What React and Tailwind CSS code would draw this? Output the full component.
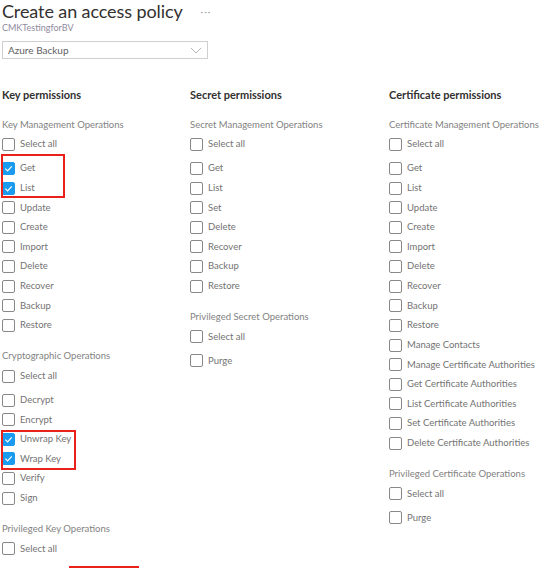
import React from 'react';

const Check = ({ checked }) => (
  <span
    className={`flex h-[13px] w-[13px] shrink-0 items-center justify-center rounded-[2px] border ${
      checked ? 'border-[#1a9bf0] bg-[#1a9bf0]' : 'border-[#8a8886] bg-white'
    }`}
  >
    {checked && (
      <svg width="9" height="9" viewBox="0 0 10 10" fill="none">
        <path d="M1.5 5.2 L4 7.6 L8.6 2.6" stroke="white" strokeWidth="1.3" />
      </svg>
    )}
  </span>
);

const Row = ({ label, checked }) => (
  <div className="flex h-[19.64px] items-center gap-[5px]">
    <Check checked={checked} />
    <span className="text-[9.5px] text-[#737373]">{label}</span>
  </div>
);

const Group = ({ title, items, checked = [], highlight, last }) => (
  <div className={last ? '' : 'mb-[11.4px]'}>
    <div className="flex h-[19.64px] items-center text-[9.5px] text-[#828282]">{title}</div>
    <div className="mb-[4.4px]">
      <Row label="Select all" />
    </div>
    <div className="relative">
      {items.map((it) => (
        <Row key={it} label={it} checked={checked.includes(it)} />
      ))}
      {highlight && (
        <div
          className="pointer-events-none absolute border-2 border-[#e8221b]"
          style={highlight}
        />
      )}
    </div>
  </div>
);

const Column = ({ title, width, children }) => (
  <div className={width}>
    <div className="mb-[10px] flex h-[20px] items-center text-[11px] font-bold text-[#323130]">
      {title}
    </div>
    {children}
  </div>
);

export default function App() {
  return (
    <div className="min-h-screen bg-white pl-[2px] font-['Lato','Open_Sans',sans-serif]">
      <div className="flex h-[22px] items-center pt-[1px]">
        <h1 className="text-[18px] leading-[21px] tracking-[-0.1px] text-[#323130]">Create an access policy</h1>
        <span className="ml-[18px] text-[10px] tracking-[1px] text-[#9a9a9a]">···</span>
      </div>
      <div className="flex h-[11px] items-center text-[9px] text-[#8f8aa0]">CMKTestingforBV</div>
      <div className="mt-[8px] flex h-[18px] w-[206px] items-center justify-between border border-[#cfcfcf] pl-[5px] pr-[5px]">
        <span className="text-[10px] text-[#606060]">Azure Backup</span>
        <svg width="12" height="7" viewBox="0 0 12 7" fill="none">
          <path d="M1 1 L6 6 L11 1" stroke="#b5b5b5" strokeWidth="1" />
        </svg>
      </div>

      <div className="mt-[26px] flex">
        <Column title="Key permissions" width="w-[188px]">
          <Group
            title="Key Management Operations"
            items={['Get', 'List', 'Update', 'Create', 'Import', 'Delete', 'Recover', 'Backup', 'Restore']}
            checked={['Get', 'List']}
            highlight={{ top: '-5px', left: '-1px', width: '64px', height: '44px' }}
          />
          <Group
            title="Cryptographic Operations"
            items={['Decrypt', 'Encrypt', 'Unwrap Key', 'Wrap Key', 'Verify', 'Sign']}
            checked={['Unwrap Key', 'Wrap Key']}
            highlight={{ top: '39.3px', left: '-1px', width: '75px', height: '40.3px' }}
          />
          <div className="flex h-[19.64px] items-center text-[9.5px] text-[#828282]">Privileged Key Operations</div>
          <Row label="Select all" />
          <div className="ml-[67px] mt-[7px] h-[24px] w-[70px] border-2 border-[#e8221b]" />
        </Column>
        <Column title="Secret permissions" width="w-[199px]">
          <Group
            title="Secret Management Operations"
            items={['Get', 'List', 'Set', 'Delete', 'Recover', 'Backup', 'Restore']}
          />
          <Group title="Privileged Secret Operations" items={['Purge']} last />
        </Column>
        <Column title="Certificate permissions" width="flex-1">
          <Group
            title="Certificate Management Operations"
            items={[
              'Get',
              'List',
              'Update',
              'Create',
              'Import',
              'Delete',
              'Recover',
              'Backup',
              'Restore',
              'Manage Contacts',
              'Manage Certificate Authorities',
              'Get Certificate Authorities',
              'List Certificate Authorities',
              'Set Certificate Authorities',
              'Delete Certificate Authorities',
            ]}
          />
          <Group title="Privileged Certificate Operations" items={['Purge']} last />
        </Column>
      </div>
    </div>
  );
}
